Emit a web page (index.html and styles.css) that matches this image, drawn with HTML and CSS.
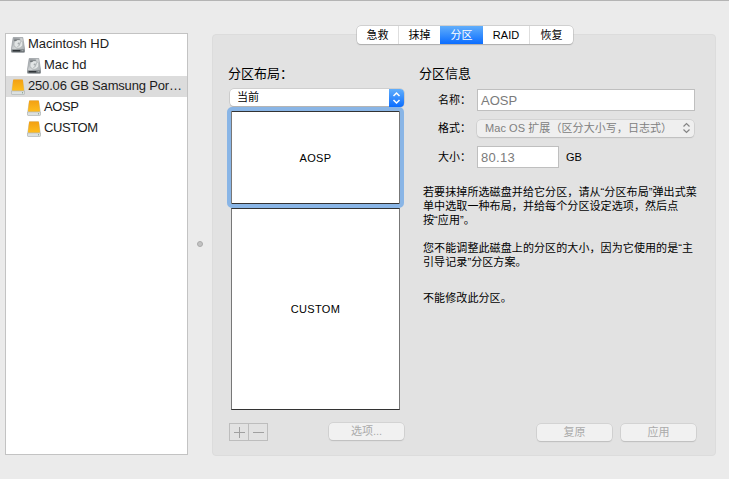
FILE: index.html
```html
<!DOCTYPE html>
<html lang="zh-CN">
<head>
<meta charset="utf-8">
<title>磁盘工具</title>
<link rel="stylesheet" href="styles.css">
</head>
<body>
<svg class="defs" width="0" height="0" aria-hidden="true">
  <defs>
    <linearGradient id="orange" x1="0" y1="0" x2="0" y2="1"><stop offset="0" stop-color="#f2a014"/><stop offset="1" stop-color="#ffbd1c"/></linearGradient>
    <linearGradient id="steel" x1="0" y1="0" x2="1" y2="1"><stop offset="0" stop-color="#9a9fa3"/><stop offset=".5" stop-color="#d4d7d8"/><stop offset="1" stop-color="#979da1"/></linearGradient>
    <symbol id="internal" viewBox="0 0 14 16">
      <path d="M2.2.5h9.6L13.6 12v2.7q0 .8-.8.8H1.2q-.8 0-.8-.8V12z" fill="url(#steel)" stroke="#8a8f93" stroke-width=".6"/>
      <ellipse cx="7.4" cy="7" rx="4.5" ry="4.3" fill="#e2e5e5" stroke="#a2a7a9" stroke-width=".7"/>
      <path d="M3.2 2.2h5.6M3.1 3.5h2.6" stroke="#6b7074" stroke-width=".9"/>
      <circle cx="7.6" cy="6.6" r="1" fill="#a5aaac"/>
      <path d="M9.6 4.4L8.4 8.4l-2 1.2" stroke="#989da0" stroke-width=".7" fill="none"/>
      <path d="M.6 12.5h12.8v2.4H.6z" fill="#646a6e"/>
      <path d="M2 13.7h7" stroke="#2d3235" stroke-width="1.3"/>
      <path d="M10.5 13.7h2" stroke="#aeb3b5" stroke-width="1"/>
    </symbol>
    <symbol id="external" viewBox="0 0 14 16">
      <path d="M2.1.5h9.8L13.6 11v3.8q0 .7-.8.7H1.2q-.8 0-.8-.7V11z" fill="#c5cac9"/>
      <path d="M2.7.5h8.6q.5 0 .6.5l1.1 10q0 .8-.8.8H1.8q-.8 0-.8-.8L2.1 1q.1-.5.6-.5z" fill="url(#orange)"/>
      <path d="M.5 12h13v2.7q0 .8-.8.8H1.3q-.8 0-.8-.8z" fill="#dce0df" stroke="#a5abaa" stroke-width=".5"/>
      <path d="M11 13.8h1" stroke="#70957a" stroke-width="1"/>
    </symbol>
  </defs>
</svg>
<main class="window">
  <nav class="sidebar">
    <div class="disk"><svg class="drive"><use href="#internal"/></svg><span>Macintosh HD</span></div>
    <div class="disk child"><svg class="drive"><use href="#internal"/></svg><span>Mac hd</span></div>
    <div class="disk selected"><svg class="drive"><use href="#external"/></svg><span class="fit">250.06 GB Samsung Por…</span></div>
    <div class="disk child"><svg class="drive"><use href="#external"/></svg><span class="fit">AOSP</span></div>
    <div class="disk child"><svg class="drive"><use href="#external"/></svg><span class="fit">CUSTOM</span></div>
  </nav>
  <div class="splitter"><i class="grip"></i></div>
  <section class="panel">
    <div class="tabs">
      <span class="tab t1">急救</span><span class="tab t2">抹掉</span><span class="tab active">分区</span><span class="tab t4">RAID</span><span class="tab t5">恢复</span>
    </div>
    <div class="content">
      <div class="layout">
        <h2>分区布局：</h2>
        <div class="select">
          <span>当前</span>
          <svg class="stepper" width="15" height="18" viewBox="0 0 15 18"><path d="M4.5 7l3-3 3 3M4.5 11l3 3 3-3" fill="none" stroke="#fff" stroke-width="1.5"/></svg>
        </div>
        <div class="map">
          <div class="part first">AOSP</div>
          <div class="part second">CUSTOM</div>
        </div>
        <div class="actions">
          <div class="pair">
            <span><svg width="11" height="11"><path d="M0 5.5h11M5.5 0v11"/></svg></span>
            <span><svg width="11" height="11"><path d="M0 5.5h11"/></svg></span>
          </div>
          <span class="button">选项...</span>
        </div>
      </div>
      <div class="info">
        <h2>分区信息</h2>
        <div class="row name"><label>名称：</label><span class="field">AOSP</span></div>
        <div class="row format"><label>格式：</label><span class="select disabled"><span class="value">Mac OS 扩展（区分大小写，日志式）</span><svg class="chevrons" width="9" height="12" viewBox="0 0 9 12"><path d="M1.5 4.5l3-3 3 3M1.5 7.5l3 3 3-3" fill="none" stroke="#858585" stroke-width="1.2"/></svg></span></div>
        <div class="row size"><label>大小：</label><span class="field short">80.13</span><span class="unit">GB</span></div>
        <div class="notes">
          <p>若要抹掉所选磁盘并给它分区，请从“分区布局”弹出式菜<br>单中选取一种布局，并给每个分区设定选项，然后点<br>按“应用”。</p>
          <p>您不能调整此磁盘上的分区的大小，因为它使用的是“主<br>引导记录”分区方案。</p>
          <p class="last">不能修改此分区。</p>
        </div>
        <div class="actions end"><span class="button">复原</span><span class="button">应用</span></div>
      </div>
    </div>
  </section>
</main>
</body>
</html>
```

FILE: styles.css
```css
* { box-sizing: border-box; }
body {
  margin: 0;
  background: #ebebeb;
  color: #000;
  font: 11px/14px "Liberation Sans", "Noto Sans CJK SC", sans-serif;
  overflow: hidden;
}
svg { display: block; flex: none; }
.defs { position: absolute; }
.window {
  display: flex;
  align-items: flex-start;
  width: 729px;
  height: 479px;
  padding: 32px 13px 0 5px;
  border-top: 1px solid #b4b4b4;
}
.sidebar {
  width: 183px;
  height: 422px;
  background: #fff;
  border: 1px solid #c3c3c3;
}
.disk {
  display: flex;
  align-items: center;
  height: 21px;
  padding-left: 5px;
  gap: 3px;
  font-size: 13px;
  line-height: 20px;
  white-space: nowrap;
  color: #1c1c1c;
}
.disk span { padding-bottom: 1px; letter-spacing: -.05px; }
.child { padding-left: 21px; }
.selected { background: #dcdcdc; }
.disk .fit { letter-spacing: -.17px; }
.child .fit { letter-spacing: -.4px; }
.drive { width: 14px; height: 16px; margin-top: 1px; }
.splitter {
  display: flex;
  align-items: center;
  justify-content: center;
  width: 24px;
  height: 422px;
}
.grip {
  width: 6px;
  height: 6px;
  border: 1px solid #aaa;
  border-radius: 50%;
  background: #c2c2c2;
}
.panel {
  width: 504px;
  height: 422px;
  margin-top: 1px;
  background: #e2e2e2;
  border: 1px solid #dcdcdc;
  border-radius: 4px;
}
.tabs {
  display: flex;
  width: 216px;
  height: 18px;
  margin: -9px 0 0 144px;
  background: #fff;
  border-radius: 4px;
  box-shadow: 0 0 0 .5px #b5b5b5, 0 1px 1px #aaa;
}
.tab {
  flex: none;
  width: 42px;
  border-right: 1px solid #dedede;
  text-align: center;
  line-height: 18px;
}
.tab.active {
  width: 43px;
  border: 0;
  color: #fff;
  background: linear-gradient(#61aefb, #0b6dff);
}
.t2 { width: 41px; border-right: 0; }
.t4 { width: 47px; }
.t5 { width: 43px; border: 0; }
.content { display: flex; padding: 21px 0 0 16px; }
.layout { width: 190px; }
h2 { margin: 0; font-size: 13px; font-weight: 400; line-height: 18px; }
.layout h2 { margin-left: -1px; }
.select {
  display: flex;
  justify-content: space-between;
  width: 174px;
  height: 17px;
  margin: 6px 0 0 1px;
  padding-left: 7px;
  background: #fff;
  border-radius: 4px;
  box-shadow: 0 0 0 .5px #bbb, 0 1px 1px #aaa;
  line-height: 17px;
}
.stepper { border-radius: 0 4px 4px 0; background: linear-gradient(#61aefb, #0b6dff); }
.map { width: 169px; margin: 5px 0 0 2px; }
.part {
  display: flex;
  align-items: center;
  justify-content: center;
  border: 1px solid #777;
  border-top-color: #333;
  border-bottom-color: #333;
  background: #fff;
  letter-spacing: .3px;
}
.first { height: 93px; outline: 4px solid #89b5e6; border-radius: 1px; }
.second { height: 202px; margin-top: 4px; }
.actions { display: flex; justify-content: space-between; width: 175px; margin-top: 13px; }
.pair { display: flex; width: 39px; height: 18px; border: 1px solid #bdbdbd; }
.pair span { display: flex; align-items: center; justify-content: center; flex: 1; }
.pair span + span { border-left: 1px solid #bdbdbd; }
.pair path { fill: none; stroke: #a0a0a0; }
.button {
  width: 75px;
  height: 17px;
  background: #f1f1f1;
  border-radius: 4px;
  box-shadow: 0 0 0 .5px #c4c4c4, 0 1px 1px #bbb;
  color: #aaa;
  text-align: center;
  line-height: 17px;
}
.row { display: flex; align-items: center; }
.row label { width: 41px; margin-left: 19px; white-space: nowrap; }
.name { height: 22px; margin-top: 6px; }
.format { height: 18px; margin-top: 8px; }
.size { height: 22px; margin-top: 9px; }
.field {
  width: 218px;
  height: 22px;
  margin-left: -2px;
  padding-left: 3px;
  background: #fff;
  border: 1px solid #bfbfbf;
  color: #7b7b7b;
  font-size: 13px;
  line-height: 22px;
}
.field.short { width: 82px; letter-spacing: .3px; }
.unit { margin-left: 7px; }
.select.disabled {
  width: 217px;
  height: 17px;
  margin: 0 0 0 -2px;
  padding: 0 3px 0 8px;
  align-items: center;
  background: #efefef;
  box-shadow: 0 0 0 .5px #c4c4c4, 0 1px 1px #bbb;
  color: #808080;
}
.value { white-space: nowrap; letter-spacing: .07px; }
.notes { height: 256px; padding: 17px 0 0 4px; white-space: nowrap; letter-spacing: .1px; }
.notes p { margin: 0 0 14px; }
.notes .last { margin-top: 22px; }
.end { justify-content: flex-start; gap: 9px; margin: 0 0 0 118px; }
```
